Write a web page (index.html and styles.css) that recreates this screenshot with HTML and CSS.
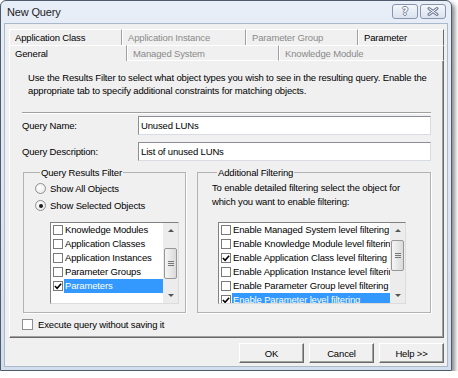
FILE: index.html
```html
<!DOCTYPE html>
<html lang="en">

<head>
    <meta charset="UTF-8">
    <meta name="viewport" content="width=device-width, initial-scale=1.0">
    <title>New Query</title>
    <link rel="stylesheet" href="styles.css">
</head>

<body>
    <div class="window">
        <!-- Title bar -->
        <div class="titlebar">
            <span class="title">New Query</span>
            <div class="title-buttons">
                <span class="tbtn tbtn-help">?</span>
                <span class="tbtn tbtn-close">
                    <svg width="12" height="9" viewBox="0 0 12 9">
                        <path d="M2 1.5 L10 7.5 M10 1.5 L2 7.5" stroke="#75839a" stroke-width="3" stroke-linecap="round" fill="none" />
                        <path d="M2 1.5 L10 7.5 M10 1.5 L2 7.5" stroke="#fff" stroke-width="1" stroke-linecap="round" fill="none" />
                    </svg>
                </span>
            </div>
        </div>

        <div class="client">
            <!-- Two rows of tabs, the selected row sits next to the panel -->
            <div class="tabs">
                <div class="tab-row">
                    <div class="tab tab-appclass">Application Class</div>
                    <div class="tab tab-appinst disabled">Application Instance</div>
                    <div class="tab tab-paramgroup disabled">Parameter Group</div>
                    <div class="tab tab-param">Parameter</div>
                </div>
                <div class="tab-row">
                    <div class="tab tab-general selected">General</div>
                    <div class="tab tab-managed disabled">Managed System</div>
                    <div class="tab tab-km disabled">Knowledge Module</div>
                </div>
            </div>

            <div class="panel">
                <p class="intro">Use the Results Filter to select what object types you wish to see in the resulting query. Enable the appropriate tab to specify additional constraints for matching objects.</p>
                <div class="etched"></div>

                <div class="field">
                    <label class="field-label">Query Name:</label>
                    <div class="textbox">Unused LUNs</div>
                </div>
                <div class="field">
                    <label class="field-label">Query Description:</label>
                    <div class="textbox">List of unused LUNs</div>
                </div>

                <div class="groups">
                    <fieldset class="group group-results">
                        <legend>Query Results Filter</legend>
                        <div class="radio-row first"><span class="radio"></span>Show All Objects</div>
                        <div class="radio-row"><span class="radio on"></span>Show Selected Objects</div>

                        <div class="listbox list-results">
                            <div class="items">
                                <div class="item"><span class="check"></span><span class="item-text">Knowledge Modules</span></div>
                                <div class="item"><span class="check"></span><span class="item-text">Application Classes</span></div>
                                <div class="item"><span class="check"></span><span class="item-text">Application Instances</span></div>
                                <div class="item"><span class="check"></span><span class="item-text">Parameter Groups</span></div>
                                <div class="item selected"><span class="check on"><svg width="9" height="9" viewBox="0 0 9 9"><path d="M1 4 L3.5 6.5 L8 1.5" stroke="#000" stroke-width="1.8" fill="none" /></svg></span><span class="item-text">Parameters</span></div>
                            </div>
                            <div class="scrollbar">
                                <div class="sb-btn"><span class="arrow-up"></span></div>
                                <div class="sb-track"><div class="thumb thumb-results"><span class="grip"></span></div></div>
                                <div class="sb-btn"><span class="arrow-down"></span></div>
                            </div>
                        </div>
                    </fieldset>

                    <fieldset class="group group-filtering">
                        <legend>Additional Filtering</legend>
                        <p class="group-text">To enable detailed filtering select the object for which you want to enable filtering:</p>

                        <div class="listbox list-filtering">
                            <div class="items">
                                <div class="item"><span class="check"></span><span class="item-text">Enable Managed System level filtering</span></div>
                                <div class="item"><span class="check"></span><span class="item-text">Enable Knowledge Module level filtering</span></div>
                                <div class="item"><span class="check on"><svg width="9" height="9" viewBox="0 0 9 9"><path d="M1 4 L3.5 6.5 L8 1.5" stroke="#000" stroke-width="1.8" fill="none" /></svg></span><span class="item-text">Enable Application Class level filtering</span></div>
                                <div class="item"><span class="check"></span><span class="item-text">Enable Application Instance level filtering</span></div>
                                <div class="item"><span class="check"></span><span class="item-text">Enable Parameter Group level filtering</span></div>
                                <div class="item selected"><span class="check on"><svg width="9" height="9" viewBox="0 0 9 9"><path d="M1 4 L3.5 6.5 L8 1.5" stroke="#000" stroke-width="1.8" fill="none" /></svg></span><span class="item-text">Enable Parameter level filtering</span></div>
                            </div>
                            <div class="scrollbar">
                                <div class="sb-btn"><span class="arrow-up"></span></div>
                                <div class="sb-track"><div class="thumb thumb-filtering"><span class="grip"></span></div></div>
                                <div class="sb-btn"><span class="arrow-down"></span></div>
                            </div>
                        </div>
                    </fieldset>
                </div>

                <div class="check-row"><span class="check big"></span>Execute query without saving it</div>
            </div>

            <div class="buttons">
                <button class="btn">OK</button>
                <button class="btn">Cancel</button>
                <button class="btn">Help &gt;&gt;</button>
            </div>
        </div>
    </div>
</body>

</html>
```

FILE: styles.css
```css
/* Page basics */
body {
    margin: 0;
    background: #fff;
    font-family: "Liberation Sans", Arial, sans-serif;
    font-size: 9.5px;
    letter-spacing: -0.15px;
    color: #000;
}

/* Dialog window frame */
.window {
    width: 452px;
    height: 371px;
    box-sizing: border-box;
    border: 1px solid #4f5b6b;
    border-radius: 6px 6px 0 0;
    background: linear-gradient(#e7eef8, #d3deec);
    padding: 0 3px 3px;
    box-shadow: 3px 3px 4px rgba(0, 0, 0, 0.45);
    display: flex;
    flex-direction: column;
}

/* Title bar */
.titlebar {
    height: 22px;
    flex: none;
    display: flex;
    justify-content: space-between;
    padding: 0 2px 0 3px;
}

.title {
    font-size: 11px;
    line-height: 22px;
    color: #1c1c1c;
}

.title-buttons {
    display: flex;
    gap: 2px;
    padding-top: 3px;
}

.tbtn {
    width: 26px;
    height: 15px;
    box-sizing: border-box;
    border: 1px solid #8796ad;
    border-radius: 3px;
    background: linear-gradient(#f4f7fb, #dbe3ee);
    display: flex;
    align-items: center;
    justify-content: center;
}

.tbtn-help {
    font-family: "DejaVu Sans", sans-serif;
    font-weight: bold;
    font-size: 10px;
    color: #fff;
    text-shadow: 1px 0 0 #75839a, -1px 0 0 #75839a, 0 1px 0 #75839a, 0 -1px 0 #75839a;
}

/* Client area */
.client {
    flex: 1;
    background: #f0f0f0;
    border: 1px solid #a9b8ca;
    padding: 5px 3px 2px 4px;
    display: flex;
    flex-direction: column;
}

/* Tabs */
.tab-row {
    display: flex;
    height: 16px;
}

.tab {
    box-sizing: border-box;
    height: 16px;
    border-top: 1px solid #fff;
    border-left: 1px solid #fff;
    border-right: 1px solid #a0a0a0;
    padding-left: 5px;
    line-height: 16px;
    white-space: nowrap;
}

.tab.disabled {
    color: #8a8a8a;
}

.tab-row + .tab-row .tab {
    border-bottom: 1px solid #fff;
}

.tab-row + .tab-row .tab.selected {
    border-bottom: none;
}

.tab-appclass { width: 113px; }
.tab-appinst { width: 124px; }
.tab-paramgroup { width: 112px; }
.tab-param { width: 86px; border-right-color: #696969; }
.tab-general { width: 118px; }
.tab-managed { width: 152px; }
.tab-km { width: 165px; border-right-color: #696969; }

/* Tab page */
.panel {
    height: 277px;
    box-sizing: border-box;
    border-left: 1px solid #fff;
    border-right: 1px solid #696969;
    border-bottom: 1px solid #696969;
    box-shadow: inset -1px -1px 0 #a0a0a0;
    padding: 10px 12px 0 12px;
}

.intro {
    margin: 0 0 0 6px;
    line-height: 13px;
}

.etched {
    margin-top: 15px;
    border-top: 1px solid #a0a0a0;
    border-bottom: 1px solid #fff;
}

/* Name and description rows */
.field {
    display: flex;
    align-items: center;
    height: 19px;
    margin-top: 7px;
}

.etched + .field {
    margin-top: 2px;
}

.field-label {
    width: 116px;
}

.textbox {
    flex: 1;
    height: 19px;
    box-sizing: border-box;
    border: 1px solid;
    border-color: #8b8e94 #d9dce2 #d9dce2 #8b8e94;
    background: #fff;
    padding-left: 2px;
    line-height: 17px;
}

/* Group boxes */
.groups {
    display: flex;
    gap: 11px;
    margin-top: 5px;
    padding-left: 1px;
}

.group {
    margin: 0;
    padding: 0;
    height: 147px;
    box-sizing: border-box;
    border: 1px solid #b3b3b3;
    box-shadow: 1px 1px 0 #fff;
    min-width: 0;
}

.group legend {
    margin-left: 5px;
    padding: 0 1px;
    line-height: 13px;
}

.group-results {
    width: 163px;
    padding-left: 11px;
}

.group-filtering {
    width: 234px;
    padding-left: 14px;
}

/* Radio buttons */
.radio-row {
    display: flex;
    align-items: center;
    height: 17px;
}

.radio-row.first {
    margin-top: 1px;
}

.radio {
    width: 11px;
    height: 11px;
    box-sizing: border-box;
    border: 1px solid #8e8f8f;
    border-radius: 50%;
    background: radial-gradient(circle at 40% 40%, #fff, #e4e4e4);
    margin-right: 4px;
    display: flex;
    align-items: center;
    justify-content: center;
}

.radio.on::after {
    content: '';
    width: 4px;
    height: 4px;
    border-radius: 50%;
    background: #1e1e1e;
}

.group-text {
    margin: 2px 0 0 0;
    max-width: 200px;
    line-height: 14px;
}

/* List boxes with checkboxes */
.listbox {
    height: 82px;
    box-sizing: border-box;
    border: 1px solid;
    border-color: #828282 #dcdcdc #dcdcdc #828282;
    background: #fff;
    display: flex;
}

.list-results {
    width: 129px;
    margin: 8px 0 0 15px;
}

.list-filtering {
    width: 188px;
    margin: 13px 0 0 6px;
}

.items {
    flex: 1;
    overflow: hidden;
}

.item {
    display: flex;
    align-items: center;
    height: 14px;
    padding-left: 2px;
    white-space: nowrap;
}

.check {
    flex: none;
    width: 10px;
    height: 10px;
    box-sizing: border-box;
    border: 1px solid #7a7a7a;
    background: #fff;
    display: flex;
    align-items: center;
    justify-content: center;
}

.item-text {
    margin-left: 1px;
    padding-left: 1px;
    line-height: 14px;
}

.item.selected .item-text {
    flex: 1;
    background: #3399ff;
    color: #fff;
}

/* Scroll bars */
.scrollbar {
    width: 15px;
    flex: none;
    background: #ececec;
    display: flex;
    flex-direction: column;
}

.sb-btn {
    height: 15px;
    display: flex;
    align-items: center;
    justify-content: center;
}

.arrow-up {
    border-left: 3px solid transparent;
    border-right: 3px solid transparent;
    border-bottom: 3px solid #555;
}

.arrow-down {
    border-left: 3px solid transparent;
    border-right: 3px solid transparent;
    border-top: 3px solid #555;
}

.sb-track {
    flex: 1;
}

.thumb {
    height: 31px;
    box-sizing: border-box;
    margin: 0 1px;
    border: 1px solid #979797;
    border-radius: 2px;
    background: linear-gradient(to right, #f5f5f5, #dadada);
    display: flex;
    align-items: center;
    justify-content: center;
}

.thumb-results { margin-top: 10px; }
.thumb-filtering { margin-top: 2px; }

.grip {
    width: 6px;
    height: 5px;
    border-top: 1px solid #777;
    border-bottom: 1px solid #777;
    box-sizing: border-box;
    background: linear-gradient(transparent 1px, #777 1px, #777 2px, transparent 2px);
}

/* Execute checkbox */
.check-row {
    display: flex;
    align-items: center;
    height: 12px;
    margin-top: 5px;
}

.check.big {
    width: 11px;
    height: 11px;
    border-color: #8e8f8f;
    margin-right: 5px;
}

/* Bottom buttons */
.buttons {
    display: flex;
    justify-content: flex-end;
    gap: 5px;
    margin-top: 5px;
}

.btn {
    width: 65px;
    height: 20px;
    box-sizing: border-box;
    font-family: inherit;
    font-size: 9.5px;
    letter-spacing: -0.15px;
    color: #000;
    background: #f0f0f0;
    border: 1px solid;
    border-color: #fff #696969 #696969 #fff;
    box-shadow: inset -1px -1px 0 #a0a0a0;
    padding: 0;
}
```
